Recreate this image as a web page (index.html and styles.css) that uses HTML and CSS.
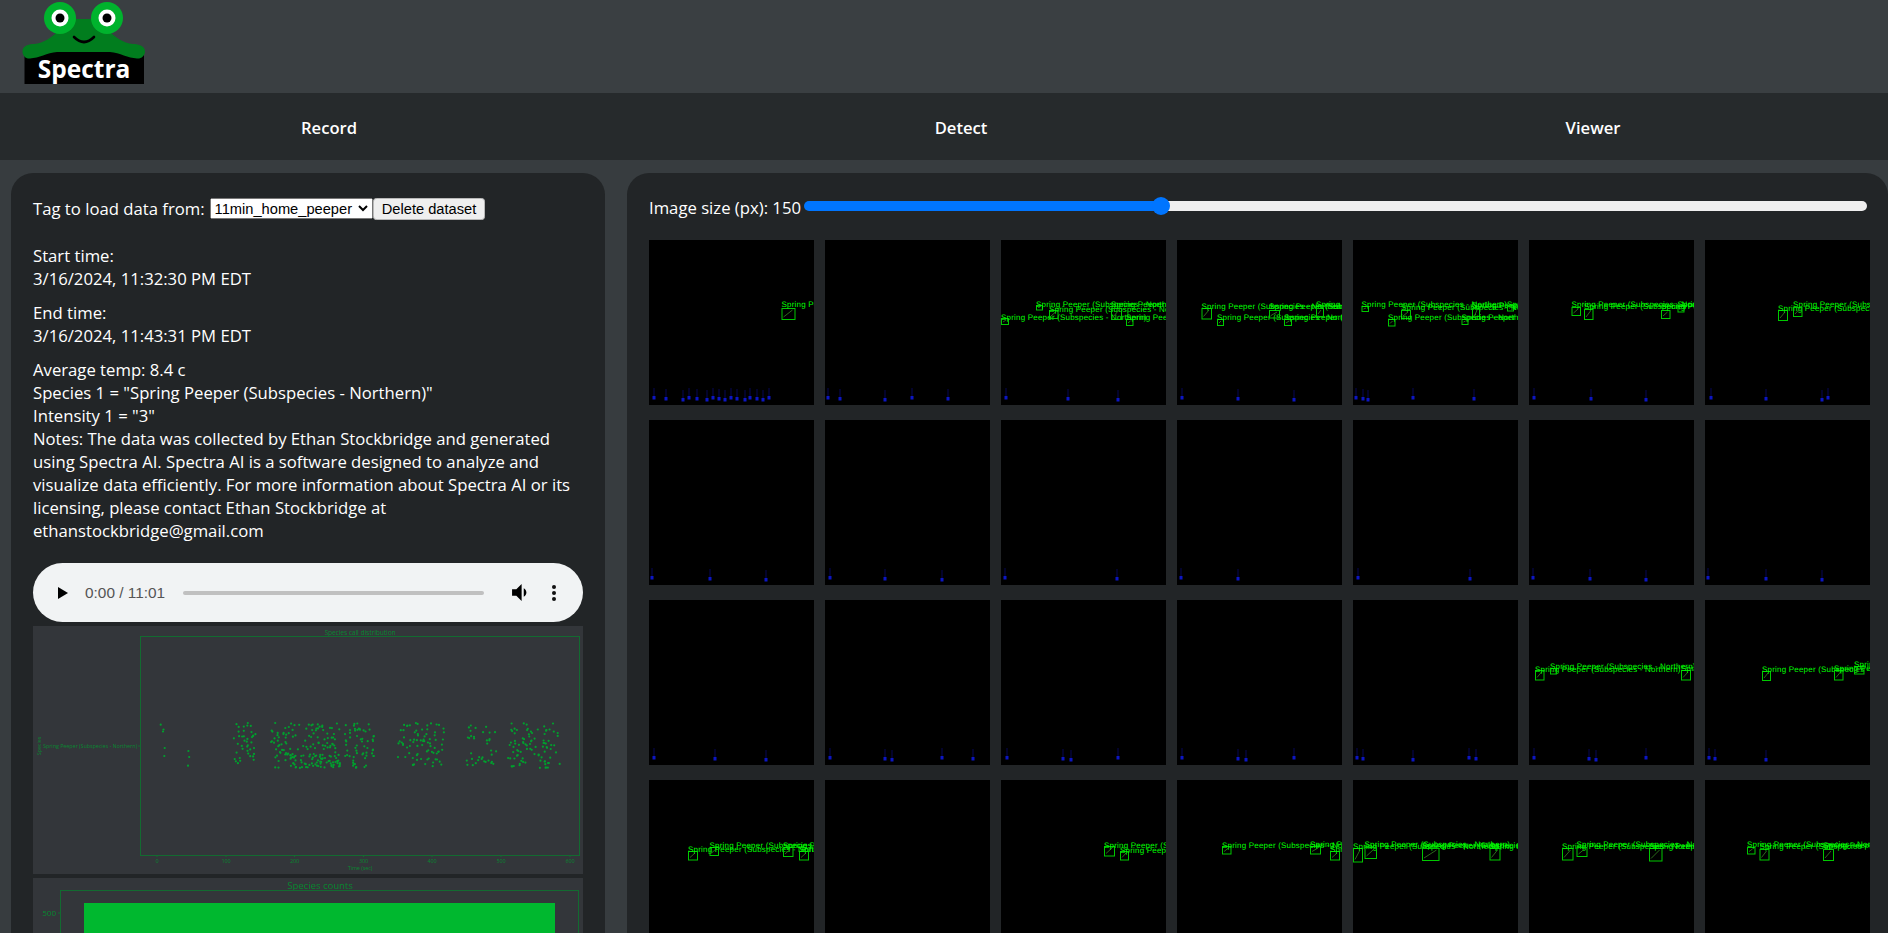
FILE: index.html
```html
<!DOCTYPE html>
<html lang="en">
<head>
<meta charset="utf-8">
<title>Spectra</title>
<link rel="stylesheet" href="styles.css">
</head>
<body>
<div class="app">
  <header class="header">
    <svg class="logo" viewBox="0 0 170 93" width="170" height="93" aria-label="Spectra logo">
      <rect class="logo-plate" x="24.5" y="52" width="119.5" height="32"/>
      <path class="logo-body" d="M22.5 51.5C22.5 46 28 44 34 44C44 43 52 37 58 31L62 19H105L109 31C115 37 123 43 133 44C139 44 145 46 145 51.5C145 56 141 59 137 58.5C128 58 120 53 110 52H57C47 53 39 58 30 58.5C26 59 22.5 56 22.5 51.5Z"/>
      <circle class="logo-eye" cx="60" cy="18" r="16"/>
      <circle class="logo-eye" cx="107" cy="18" r="16"/>
      <circle class="logo-white" cx="60" cy="18" r="8.5"/>
      <circle class="logo-white" cx="107" cy="18" r="8.5"/>
      <circle cx="60" cy="18" r="4.5"/>
      <circle cx="107" cy="18" r="4.5"/>
      <path class="logo-smile" d="M74 37Q84 47 94 37"/>
      <text class="logo-text" x="84" y="78" text-anchor="middle">Spectra</text>
    </svg>
  </header>
  <nav class="nav">
    <a class="nav-item">Record</a>
    <a class="nav-item">Detect</a>
    <a class="nav-item">Viewer</a>
  </nav>
  <main class="main">
    <section class="card side">
      <div class="tag-row">
        <span class="tag-label">Tag to load data from:</span>
        <select class="control picker"><option>11min_home_peeper</option></select>
        <button class="control delete">Delete dataset</button>
      </div>
      <p class="info">Start time:<br>3/16/2024, 11:32:30 PM EDT</p>
      <p class="info">End time:<br>3/16/2024, 11:43:31 PM EDT</p>
      <p class="info">Average temp: 8.4 c<br>Species 1 = "Spring Peeper (Subspecies - Northern)"<br>Intensity 1 = "3"<br>Notes: The data was collected by Ethan Stockbridge and generated<br>using Spectra AI. Spectra AI is a software designed to analyze and<br>visualize data efficiently. For more information about Spectra AI or its<br>licensing, please contact Ethan Stockbridge at<br>ethanstockbridge@gmail.com</p>
      <div class="audio">
        <svg class="play" viewBox="0 0 10 12" width="10" height="12"><path d="M0 0L10 6L0 12Z"/></svg>
        <span class="time">0:00 / 11:01</span>
        <div class="progress"></div>
        <svg class="volume" viewBox="3 4 14 16" width="17" height="17"><path d="M3 9v6h4l5 5V4L7 9H3zm13.5 3c0-1.77-1.02-3.29-2.5-4.03v8.05c1.48-.73 2.5-2.25 2.5-4.02z"/></svg>
        <svg class="more" viewBox="0 0 4 16" width="4" height="16"><circle cx="2" cy="2" r="2"/><circle cx="2" cy="8" r="2"/><circle cx="2" cy="14" r="2"/></svg>
      </div>
      <svg class="chart first" viewBox="0 0 550 248" width="550" height="248">
        <text class="c-title" x="327" y="9" text-anchor="middle">Species call distribution</text>
        <rect class="c-frame" x="107.5" y="10.5" width="439" height="219"/>
        <g id="dots" class="c-dots"></g>
        <path class="c-frame" d="M124 229v2M193 229v2M261.500 229v2M330.500 229v2M399 229v2M468 229v2M537 229v2M105 120h2"/>
        <text class="c-tick" x="124" y="237" text-anchor="middle">0</text>
        <text class="c-tick" x="193" y="237" text-anchor="middle">100</text>
        <text class="c-tick" x="261.500" y="237" text-anchor="middle">200</text>
        <text class="c-tick" x="330.500" y="237" text-anchor="middle">300</text>
        <text class="c-tick" x="399" y="237" text-anchor="middle">400</text>
        <text class="c-tick" x="468" y="237" text-anchor="middle">500</text>
        <text class="c-tick" x="537" y="237" text-anchor="middle">600</text>
        <text class="c-tick" x="327" y="244" text-anchor="middle">Time (sec)</text>
        <text class="c-tick" x="10" y="122">Spring Peeper (Subspecies - Northern)</text>
        <text class="c-tick" x="8" y="120" text-anchor="middle" transform="rotate(-90 8 120)">Species</text>
      </svg>
      <svg class="chart" viewBox="0 0 550 248" width="550" height="248">
        <text class="c-title2" x="287" y="11" text-anchor="middle">Species counts</text>
        <rect class="c-frame" x="27.5" y="12.500" width="518" height="230"/>
        <rect class="c-bar" x="51" y="25" width="471" height="217"/>
        <path class="c-frame" d="M25 35h2"/>
        <text class="c-tick2" x="23" y="38" text-anchor="end">500</text>
      </svg>
    </section>
    <section class="card gallery">
      <div class="size-row">
        <label class="size-label">Image size (px): 150</label>
        <div class="slider-wrap"><input class="slider" type="range" min="50" max="350" value="150"></div>
      </div>
      <div id="tiles" class="tiles"></div>
    </section>
  </main>
</div>
<script src="app.js"></script>
</body>
</html>
```
FILE: styles.css
```css
* { box-sizing: border-box; }
html, body { margin: 0; height: 100%; overflow: hidden; }
body {
  background: #373c3f;
  color: #fff;
  font-family: "Open Sans", "Liberation Sans", sans-serif;
  font-size: 16.7px;
  line-height: 23px;
}
.app { height: 933px; overflow: hidden; }
.header { height: 93px; background: #3a3f42; }
.logo { display: block; }
.logo-plate { fill: #000; }
.logo-body { fill: #017d1e; }
.logo-eye { fill: #00b32d; }
.logo-white { fill: #fff; }
.logo-smile { fill: none; stroke: #000; stroke-width: 2.6; stroke-linecap: round; }
.logo-text { fill: #fff; font: 700 24.5px "Open Sans", sans-serif; }
.nav {
  height: 67px;
  background: #262a2c;
  display: grid;
  grid-template-columns: repeat(3, 632px);
  padding: 2px 0 0 13px;
  align-items: center;
}
.nav-item { text-align: center; font-weight: 600; font-size: 16.6px; }
.main {
  display: grid;
  grid-template-columns: 594px 1261px;
  gap: 22px;
  padding: 13px 0 0 11px;
}
.card {
  background: #222527;
  border-radius: 22px;
  padding: 22px;
  height: 900px;
}
.tag-row { display: flex; align-items: center; height: 26px; margin-bottom: 23px; }
.tag-label { margin-right: 5px; }
.control {
  zoom: 1.1;
  font: 13.33px "Liberation Sans", sans-serif;
  margin: 1px 0 0;
}
.picker { width: 149px; height: 18.5px; }
.delete {
  background: #efefef;
  border: 1px solid #b8b8b8;
  border-radius: 3px;
  color: #000;
  width: 101px;
  height: 20px;
  padding: 0;
}
.info { margin: 0 0 11px; white-space: nowrap; }
.audio {
  width: 550px;
  height: 59px;
  margin-top: 21px;
  background: #f1f3f4;
  border-radius: 30px;
  display: flex;
  align-items: center;
  padding: 0 29px 0 25px;
}
.play { fill: #000; flex: none; }
.time { font: 15.4px "Liberation Sans", sans-serif; color: #555; margin-left: 17px; width: 80px; flex: none; white-space: nowrap; }
.progress { width: 301px; height: 4px; background: #c0c0c0; border-radius: 2px; margin-left: 18px; flex: none; }
.volume { fill: #000; margin-left: 27px; flex: none; }
.more { fill: #111; margin-left: 24px; flex: none; }
.chart { display: block; background: #33363a; filter: blur(0.3px); margin-top: 4px; }
.c-title { fill: #0c8a32; font: 6.500px "Open Sans", sans-serif; }
.c-title2 { fill: #0a8a30; font: 9.500px "Open Sans", sans-serif; }
.c-frame { fill: none; stroke: #126b30; stroke-width: 1; }
.c-tick { fill: #0c8a32; font: 5.300px "Open Sans", sans-serif; }
.c-tick2 { fill: #0a8a30; font: 8px "Open Sans", sans-serif; }
.c-bar { fill: #00b82f; }
.c-dots { fill: #00a02e; }
.gallery { padding-right: 0; }
.size-row { display: flex; align-items: center; height: 23px; padding: 1px 21px 0 0; margin-bottom: 22px; }
.size-label { white-space: nowrap; flex: none; margin-right: 3px; }
.slider-wrap { flex: 1; display: flex; margin-top: -3px; }
.slider {
  -webkit-appearance: none;
  appearance: none;
  background: transparent;
  width: 100%;
  height: 18px;
  margin: 0;
}
.slider::-webkit-slider-runnable-track {
  height: 10px;
  border-radius: 5px;
  background: linear-gradient(to right, #0075ff 33.5%, #efefef 33.5%);
}
.slider::-webkit-slider-thumb {
  -webkit-appearance: none;
  width: 18px;
  height: 18px;
  margin-top: -4px;
  border-radius: 50%;
  background: #0075ff;
}
.tiles {
  display: grid;
  grid-template-columns: repeat(7, 165px);
  grid-auto-rows: 165px;
  gap: 15px 11px;
}
.tile { display: block; background: #000; }
.t-label { fill: #00ff00; font: 8px "Liberation Sans", sans-serif; letter-spacing: 0.2px; text-rendering: geometricPrecision; }
.t-box { fill: none; stroke: #00c800; stroke-width: 1; }
.t-mark { stroke: #2c6a1c; stroke-width: 1; }
.t-dot { fill: #0c16c4; }
.t-stem { fill: #03032a; }
```
FILE: app.js
```js
var LABEL = 'Spring Peeper (Subspecies - Northern)';
// each tile: detection boxes [x, y, w, h, labelBaseline] and spectrogram peaks
var TILES = [
  { b: [[132.500, 68, 13, 11, 67]], p: [4, 16, 33, 39, 47, 57, 63, 69, 75, 81, 87, 95, 100, 107, 113, 119] },
  { b: [], p: [2, 14, 59, 86, 122] },
  { b: [[0, 78, 7, 6, 80], [35, 65, 6, 4.500, 67], [48, 70, 8.500, 8, 72], [110, 68, 10, 11, 67], [125, 79, 6.500, 6, 80]], p: [4, 66, 116] },
  { b: [[24.500, 68, 9.500, 10.500, 69], [40, 79, 6, 6, 80], [92, 70, 10, 7.500, 69], [107, 79, 7, 6, 80], [139, 68, 7, 8, 67]], p: [4, 60, 116] },
  { b: [[8.500, 66, 6.500, 5, 67], [48, 70, 9, 8, 70], [35, 79, 6.500, 6.500, 80], [119, 68, 7, 11, 68], [108.500, 79, 6, 5, 80], [154, 65, 6, 5.500, 67]], p: [2, 9, 14, 59, 120] },
  { b: [[42.500, 67, 8.500, 8, 67], [55, 69, 8.500, 10, 69], [132, 70, 8.500, 8, 69], [148.500, 66, 6, 5.500, 67]], p: [4, 61, 116] },
  { b: [[73, 70, 9, 10, 71], [88, 67, 8.500, 9, 67]], p: [5, 60, 116, 122] },

  { b: [], p: [2, 60, 116] }, { b: [], p: [4, 59, 116] }, { b: [], p: [3, 115] }, { b: [], p: [3, 60] },
  { b: [], p: [4, 116] }, { b: [], p: [3, 60, 116] }, { b: [], p: [2, 60, 116] },

  { b: [], p: [4, 65, 116] }, { b: [], p: [4, 59, 66, 116, 147] }, { b: [], p: [5, 61, 69, 116] }, { b: [], p: [4, 60, 68, 116] },
  { b: [], p: [3, 9, 59, 115, 122] },
  { b: [[6, 70, 8.500, 9.500, 72], [21, 68, 6, 5.500, 69], [152, 70, 9, 9.500, 71]], p: [4, 59, 66, 116] },
  { b: [[57, 71, 8, 9, 72], [129, 70, 8.500, 9.500, 71], [149, 66, 9.500, 7.500, 67]], p: [3, 9, 60] },

  { b: [[39, 71, 9, 8.500, 72], [60.500, 67, 8.500, 8, 68], [134, 67, 9.500, 9, 68], [150, 71, 9, 8.500, 72]], p: [] },
  { b: [], p: [] },
  { b: [[103, 66, 10, 9.500, 68], [119, 71, 8, 8.500, 73]], p: [] },
  { b: [[45, 66, 8.500, 7.500, 68], [133, 66, 10, 7.500, 67], [153, 71, 9, 8.500, 72]], p: [] },
  { b: [[0, 68, 9, 13.500, 69], [11.500, 67, 11.500, 11, 67], [69, 68, 16.500, 12, 68], [136.500, 68, 10, 11.500, 69]], p: [] },
  { b: [[33, 68, 10.500, 11.500, 69], [47.500, 67, 10, 9, 67], [120, 68, 12.500, 12.500, 69]], p: [] },
  { b: [[42, 67, 7.500, 6.500, 67], [54.500, 69, 9, 10.500, 69], [118, 69, 10, 11, 68]], p: [] }
];

function tileMarkup(t) {
  var s = '<svg class="tile" viewBox="0 0 165 165" width="165" height="165">';
  t.p.forEach(function (x, i) {
    var y = 156 + (i % 3);
    s += '<rect class="t-stem" x="' + x + '" y="' + (y - 8) + '" width="2" height="8"/>';
    s += '<rect class="t-dot" x="' + (x - 0.5) + '" y="' + y + '" width="3" height="3.500"/>';
  });
  t.b.forEach(function (b) {
    s += '<line class="t-mark" x1="' + (b[0] + 2) + '" y1="' + (b[1] + b[3] - 2) + '" x2="' + (b[0] + b[2] - 2) + '" y2="' + (b[1] + 2) + '"/>';
    s += '<rect class="t-box" x="' + (b[0] + 0.5) + '" y="' + (b[1] + 0.5) + '" width="' + b[2] + '" height="' + b[3] + '"/>';
    s += '<text class="t-label" x="' + b[0] + '" y="' + b[4] + '">' + LABEL + '</text>';
  });
  return s + '</svg>';
}
document.getElementById('tiles').innerHTML = TILES.map(tileMarkup).join('');

// scatter of detections: [xFrom, xTo, yFrom, yTo, count] in chart pixels
var CLUSTERS = [
  [200, 224, 97, 142, 40],
  [238, 307, 97, 142, 120],
  [252, 307, 128, 142, 50],
  [312, 343, 97, 142, 60],
  [365, 413, 97, 142, 78],
  [433, 465, 97, 142, 36],
  [475, 527, 97, 142, 92]
];
var FIXED = [[127.700, 98.700], [130.500, 103.500], [130, 105.500], [131.700, 122], [131.300, 130], [155.400, 125], [156.200, 131], [155, 139.700]];
var seed = 7;
function rnd() { seed = (seed * 1103515245 + 12345) % 2147483648; return seed / 2147483648; }
for (var n = 0; n < 20; n++) rnd();
var dots = FIXED.slice();
CLUSTERS.forEach(function (c) {
  for (var i = 0; i < c[4]; i++) dots.push([c[0] + rnd() * (c[1] - c[0]), c[2] + rnd() * (c[3] - c[2])]);
});
document.getElementById('dots').innerHTML = dots.map(function (d) {
  return '<circle cx="' + d[0].toFixed(1) + '" cy="' + d[1].toFixed(1) + '" r="1.100"/>';
}).join('');
```
